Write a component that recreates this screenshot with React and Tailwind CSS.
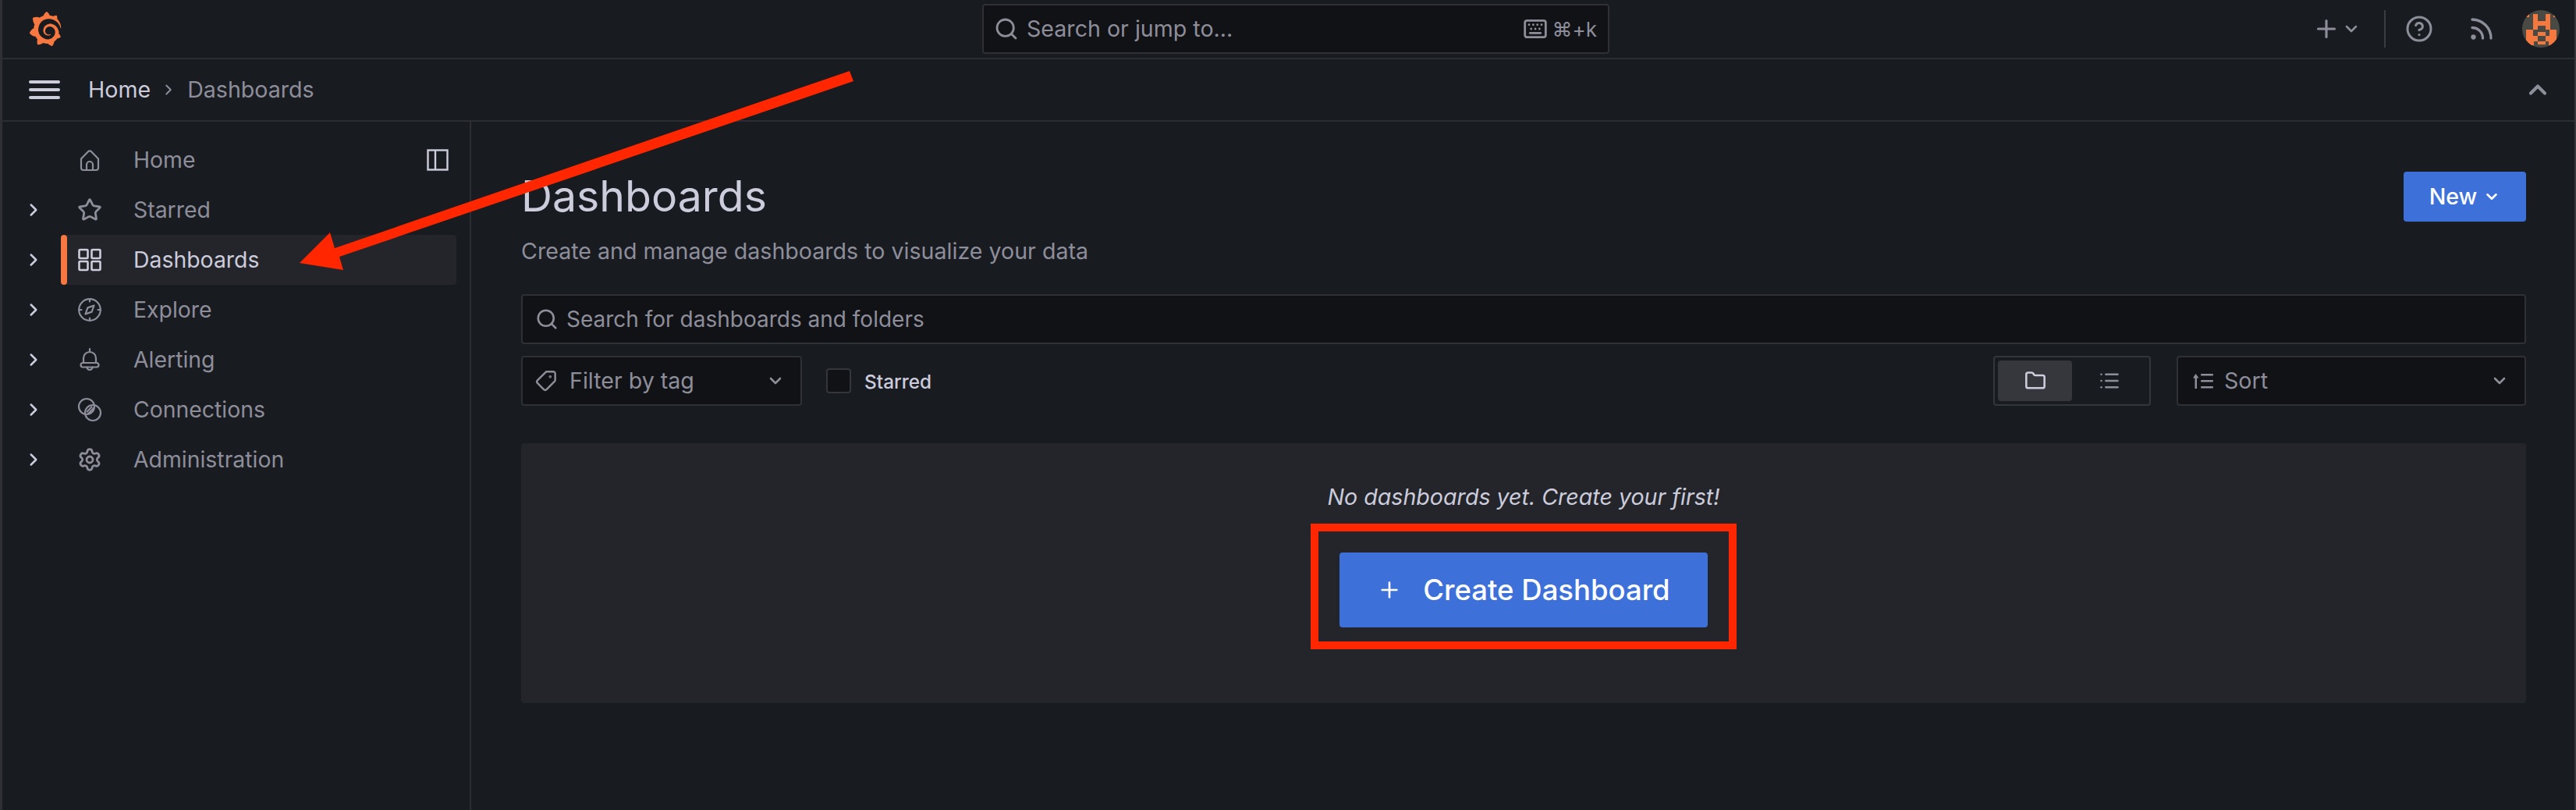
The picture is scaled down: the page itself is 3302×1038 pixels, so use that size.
import React from "react";
import { ChevronRight, ChevronDown, ChevronUp, Star, Settings, Search, Keyboard, Plus, CircleHelp, Rss, Tag, Folder, List } from "lucide-react";
import { SiGrafana } from "react-icons/si";

const HomeIcon = () => (
  <svg width="32" height="32" viewBox="0 0 32 32" fill="none" stroke="currentColor" strokeWidth="2.2" strokeLinejoin="round" strokeLinecap="round">
    <path d="M5 14.5 14 5.2a2.8 2.8 0 0 1 4 0l9 9.3V26a3 3 0 0 1-3 3H8a3 3 0 0 1-3-3Z" />
    <path d="M12 29v-7a4 4 0 0 1 8 0v7" />
  </svg>
);
const AppsIcon = () => (
  <svg width="32" height="32" viewBox="0 0 32 32" fill="none" stroke="currentColor" strokeWidth="2.6" strokeLinejoin="round">
    <rect x="2.5" y="3" width="11" height="11" rx="1" />
    <rect x="18.5" y="3" width="11" height="11" rx="1" />
    <rect x="2.5" y="18" width="11" height="11" rx="1" />
    <rect x="18.5" y="18" width="11" height="11" rx="1" />
  </svg>
);
const CompassIcon = () => (
  <svg width="32" height="32" viewBox="0 0 32 32" fill="none" stroke="currentColor" strokeWidth="2.2" strokeLinejoin="round" strokeLinecap="round">
    <circle cx="16" cy="16" r="13.8" />
    <path d="M16 2v3.5M16 26.5V30M2 16h3.5M26.5 16H30" />
    <path d="M21.5 10.5 18.6 18.6 10.5 21.5 13.4 13.4Z" />
  </svg>
);
const BellIcon = () => (
  <svg width="32" height="32" viewBox="0 0 32 32" fill="none" stroke="currentColor" strokeWidth="2.2" strokeLinejoin="round" strokeLinecap="round">
    <path d="M16 2v3M8 20v-6a8 8 0 0 1 16 0v6" />
    <rect x="4.5" y="20" width="23" height="5.5" rx="2.7" />
    <path d="M12.5 25.5a3.5 3.5 0 0 0 7 0" />
  </svg>
);
const LinkIcon = () => (
  <svg width="32" height="32" viewBox="0 0 32 32" fill="none" stroke="currentColor" strokeWidth="2.2" strokeLinecap="round">
    <circle cx="12" cy="12" r="10" />
    <circle cx="20" cy="20" r="10" />
    <path d="M12.5 18.5 18.5 12.5M14 21l7-7" />
  </svg>
);
const PanelIcon = () => (
  <svg width="28" height="28" viewBox="0 0 28 28" fill="none" stroke="currentColor" strokeWidth="2.4">
    <rect x="1.5" y="1.5" width="25" height="25" />
    <path d="M11 1.5v25" />
  </svg>
);
const SortIcon = () => (
  <svg width="28" height="28" viewBox="0 0 28 28" fill="currentColor">
    <path d="M4.5 5 8.5 10.5H6V24H3.5V10.5H1Z" />
    <rect x="11" y="5" width="16" height="2.6" rx="1" />
    <rect x="11" y="13" width="16" height="2.6" rx="1" />
    <rect x="11" y="21" width="16" height="2.6" rx="1" />
  </svg>
);
const Avatar = () => (
  <svg width="48" height="48" viewBox="0 0 48 48" className="rounded-full">
    <rect width="48" height="48" fill="#4a4a44" />
    <g fill="#f5793f">
      <path d="M14 5h6v9h10V5h6v20h-6V20H20v5h-6Z" />
      <path d="M5 25h9v8h6v7h-5v5h-8v-5H5Z" />
      <path d="M35 25h9v15h-2v5h-8v-5h-4v-7h5Z" />
      <path d="M20 28h10v5H20Z" />
      <path d="M20 40h10v4H20Z" />
      <path d="M5 5h4v4H5ZM40 5h4v4h-4Z" />
    </g>
  </svg>
);

const items = [
  { label: "Home", icon: <HomeIcon />, noChevron: true, panel: true },
  { label: "Starred", icon: <Star size={32} strokeWidth={2.1} /> },
  { label: "Dashboards", icon: <AppsIcon />, active: true },
  { label: "Explore", icon: <CompassIcon /> },
  { label: "Alerting", icon: <BellIcon /> },
  { label: "Connections", icon: <LinkIcon /> },
  { label: "Administration", icon: <Settings size={32} strokeWidth={2.1} /> },
];

function NavRow({ item }) {
  return (
    <div className="flex h-16 items-center">
      <div className="flex w-[75px] pl-[27px] text-[#ccccdc]">
        {!item.noChevron && <ChevronRight size={26} strokeWidth={2.3} />}
      </div>
      <div className={`flex h-16 w-[507px] items-center rounded-[4px] pr-[10px] ${item.active ? "bg-[#23252a] text-[#ccccdc]" : "text-[#8e8e9b]"}`}>
        <div className={`h-16 w-2 rounded-[4px] ${item.active ? "bg-[#f6773f]" : ""}`} />
        <div className="ml-[13px] flex w-8 justify-center">{item.icon}</div>
        <span className="ml-[40px] text-[28.4px] leading-8">{item.label}</span>
        {item.panel && (
          <span className="ml-auto text-[#ccccdc]">
            <PanelIcon />
          </span>
        )}
      </div>
    </div>
  );
}

export default function App() {
  return (
    <div className="relative flex h-[1038px] w-[3302px] flex-col overflow-hidden border-l-[3px] border-r-2 border-l-[#2d2f34] border-r-[#34363b] bg-[#181b20] font-['Inter',sans-serif] text-[#ccccdc]">
      <header className="flex h-[76px] shrink-0 items-center border-b-2 border-[#2b2d32]">
        <div className="flex w-[1256px] shrink-0 pl-[33px]">
          <SiGrafana size={44} className="text-[#f6773f]" />
        </div>
        <div className="flex h-[64px] w-[804px] shrink-0 items-center rounded-[4px] border-2 border-[#2e3036] bg-[#111216] pl-[13px] pr-[14px] text-[#8e8e9b]">
          <Search size={32} strokeWidth={2.1} />
          <span className="ml-[10px] text-[28.6px]">Search or jump to...</span>
          <Keyboard size={32} strokeWidth={2.1} className="ml-auto" />
          <span className="ml-[6px] text-[26px]">⌘+k</span>
        </div>
        <div className="flex flex-1 items-center text-[#8e8e9b]">
          <Plus size={36} strokeWidth={2.1} className="ml-[901px] shrink-0" />
          <ChevronDown size={24} strokeWidth={2.6} className="ml-[2px] shrink-0" />
          <div className="ml-[30px] h-12 w-[2px] shrink-0 bg-[#3a3c40]" />
          <CircleHelp size={36} strokeWidth={2} className="ml-[25px] shrink-0" />
          <Rss size={36} strokeWidth={2.2} className="ml-[44px] shrink-0" />
          <div className="ml-[34px] shrink-0">
            <Avatar />
          </div>
        </div>
      </header>

      <div className="flex h-[80px] shrink-0 items-center border-b-2 border-[#2b2d32]">
        <div className="ml-[34px] flex w-10 flex-col gap-[6px]">
          <div className="h-1 rounded bg-[#ccccdc]" />
          <div className="h-1 rounded bg-[#ccccdc]" />
          <div className="h-1 rounded bg-[#ccccdc]" />
        </div>
        <span className="ml-[36px] text-[28.6px] text-[#ccccdc]">Home</span>
        <ChevronRight size={22} strokeWidth={2.2} className="ml-[12px] text-[#8e8e9b]" />
        <span className="ml-[13px] text-[28.6px] text-[#8e8e9b]">Dashboards</span>
        <ChevronUp size={36} strokeWidth={2.8} className="ml-auto mr-[29px] text-[#8e8e9b]" />
      </div>

      <div className="flex min-h-0 flex-1">
        <aside className="w-[601px] shrink-0 border-r-2 border-[#2b2d32] pt-[17px]">
          {items.map((item) => (
            <NavRow key={item.label} item={item} />
          ))}
        </aside>

        <main className="flex-1 pl-[64px] pr-[62px] pt-[64px]">
          <div className="flex h-[120px] items-start justify-between">
            <div>
              <h1 className="h-[66px] text-[55.4px] font-normal leading-[62px] text-[#ccccdc]">Dashboards</h1>
              <p className="mt-[18px] text-[28.6px] leading-9 text-[#8e8e9b]">Create and manage dashboards to visualize your data</p>
            </div>
            <button className="flex h-16 w-[157px] items-center justify-center gap-[8px] rounded-[4px] bg-[#3d71d9] text-[28.6px] font-medium text-white">
              New
              <ChevronDown size={22} strokeWidth={2.8} />
            </button>
          </div>

          <div className="mt-[37px] flex h-[64px] items-center rounded-[4px] border-2 border-[#2e3036] bg-[#111216] pl-[16px] text-[#8e8e9b]">
            <Search size={30} strokeWidth={2.1} />
            <span className="ml-[10px] text-[28px]">Search for dashboards and folders</span>
          </div>

          <div className="mt-[15px] flex h-[64px] items-center">
            <div className="flex h-16 w-[360px] items-center rounded-[4px] border-2 border-[#2e3036] bg-[#111216] pl-[16px] pr-[20px] text-[#8e8e9b]">
              <Tag size={28} strokeWidth={2.1} className="-scale-x-100" />
              <span className="ml-[16px] text-[28.6px]">Filter by tag</span>
              <ChevronDown size={24} strokeWidth={2.6} className="ml-auto" />
            </div>
            <div className="ml-[31px] h-[32px] w-[32px] rounded-[4px] border-2 border-[#34363c] bg-[#111216]" />
            <span className="ml-[17px] pt-[2px] text-[24.4px] font-medium text-[#ccccdc]">Starred</span>

            <div className="ml-auto flex h-16 w-[202px] items-center rounded-[4px] border-2 border-[#34363c] p-[4px]">
              <div className="flex h-[52px] w-[96px] items-center justify-center rounded-[4px] bg-[#35373c] text-[#ccccdc]">
                <Folder size={28} strokeWidth={2.2} />
              </div>
              <div className="flex h-[52px] w-[96px] items-center justify-center text-[#8e8e9b]">
                <List size={28} strokeWidth={2.2} />
              </div>
            </div>
            <div className="ml-[33px] flex h-16 w-[448px] items-center rounded-[4px] border-2 border-[#2e3036] bg-[#111216] pl-[18px] pr-[20px] text-[#8e8e9b]">
              <SortIcon />
              <span className="ml-[13px] text-[28.6px]">Sort</span>
              <ChevronDown size={24} strokeWidth={2.6} className="ml-auto" />
            </div>
          </div>

          <div className="mt-[48px] flex h-[333px] flex-col items-center rounded-[4px] bg-[#23252a] pt-[51px]">
            <p className="text-[28.6px] italic leading-9 text-[#ccccdc]">No dashboards yet. Create your first!</p>
            <div className="relative mt-[53px]">
              <button className="flex h-24 w-[472px] items-center justify-center gap-[27px] rounded-[4px] bg-[#3d71d9] text-[36.5px] font-medium text-white">
                <Plus size={32} strokeWidth={2} />
                Create Dashboard
              </button>
              <div className="absolute -bottom-[28px] -left-[37px] -right-[37px] -top-[37px] border-[10px] border-[#ff2600]" />
            </div>
          </div>
        </main>
      </div>

      <div className="absolute bottom-0 left-[-3px] top-[600px] w-[2px] bg-[#1c7a3c]" />
      <svg className="pointer-events-none absolute left-[-3px] top-0" width="3302" height="1038" viewBox="0 0 3302 1038">
        <polygon points="1089,91 429,318 423,298 384,337 440,346 435,329 1094,104" fill="#ff2600" />
      </svg>
    </div>
  );
}
